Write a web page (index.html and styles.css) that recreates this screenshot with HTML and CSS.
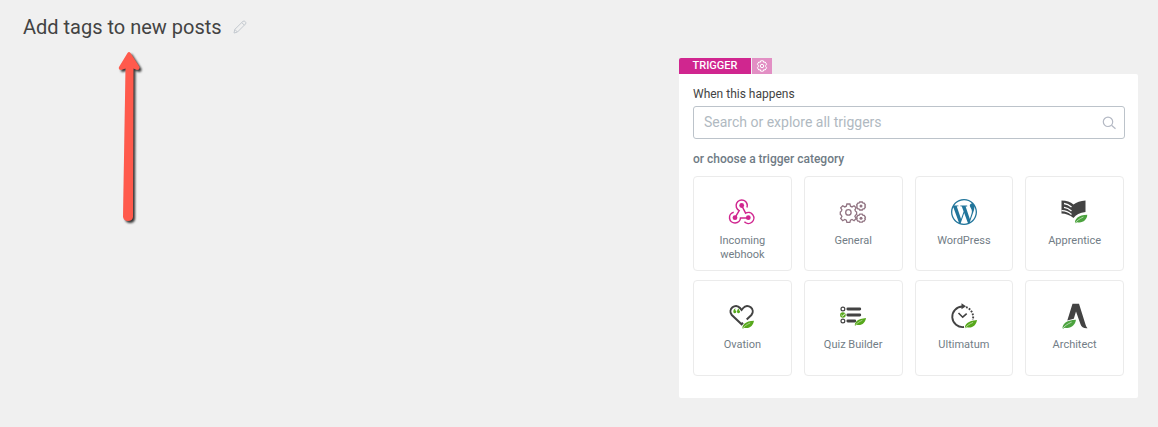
FILE: index.html
```html
<!DOCTYPE html>
<html lang="en">
<head>
<meta charset="utf-8">
<title>Add tags to new posts</title>
<link rel="stylesheet" href="styles.css">
</head>
<body>
<svg class="defs" aria-hidden="true">
  <symbol id="leaf" viewBox="0 0 12 9" preserveAspectRatio="none">
    <path d="M.9 9C.4 4.500 3.600.8 12 0c-.6 5.400-4.200 9-9.300 7.700z"/>
    <path d="M.5 9C2.400 6.200 5 4.200 8.400 2.500" fill="none" stroke="#fff" stroke-width=".5"/>
  </symbol>
</svg>
<header class="titlebar">
  <h1 class="title">Add tags to new posts</h1>
  <button class="edit" type="button" aria-label="Edit title">
    <svg width="14" height="14" viewBox="0 0 14 14"><path d="M1 13l.8-3.600L10 1.300c1.500-1 3.700 1 2.600 2.600l-8.200 8.200zM8.800 2.600l2.600 2.600M2 9.600l2.400 2.400"/></svg>
  </button>
</header>
<svg class="arrow" width="36" height="180" viewBox="0 0 36 180" aria-hidden="true">
  <path d="M14.500 3Q16 1 17.500 3L26.500 17Q27 20 24 20L20.500 18.500 20 167Q19.500 171 15 171 11 171 10 167L12.500 18.500 8 20Q5 20 6 17Z"/>
</svg>
<main class="content">
  <section class="trigger">
    <div class="tabs">
      <span class="tab">TRIGGER</span>
      <button class="settings" type="button" aria-label="Trigger settings">
        <svg width="12" height="12" viewBox="0 0 12 12"><path d="M4.700.8h2.600l.4 1.500 1.500-.3 1.400 2.200-.9 1v1.600l.9 1-1.400 2.200-1.500-.3-.4 1.500H4.700l-.4-1.500-1.500.3-1.400-2.200.9-1V5.200l-.9-1L2.800 2l1.500.3z"/><circle cx="6" cy="6" r="1.700"/></svg>
      </button>
    </div>
    <div class="panel">
      <label class="label" for="search">When this happens</label>
      <div class="searchbox">
        <input class="search" id="search" type="text" placeholder="Search or explore all triggers">
        <svg class="lens" width="14" height="14" viewBox="0 0 14 14"><circle cx="6" cy="5.800" r="4.700"/><path d="M9.500 9.300l4 3.500"/></svg>
      </div>
      <p class="subtitle">or choose a trigger category</p>
      <div class="grid">
        <button class="card" type="button">
          <svg class="icon" viewBox="0 0 26 26">
            <g fill="none" stroke="#d0268f" stroke-width="1.500">
              <path d="M6 18.600l4.200-7A5.600 5.600 0 1 1 18 8.500"/>
              <path d="M12.700 6.500l3.900 7.700a5.500 5.500 0 1 1-1.200 8.600"/>
              <path d="M19.300 18.900h-7.800a5.500 5.500 0 1 1-6.800-5.700"/>
            </g>
            <g fill="#d0268f"><circle cx="12.700" cy="6.500" r="2.400"/><circle cx="6" cy="18.700" r="2.400"/><circle cx="19.300" cy="18.700" r="2.400"/></g>
          </svg>
          Incoming webhook
        </button>
        <button class="card" type="button">
          <svg class="icon" viewBox="0 0 26 26">
            <g fill="none" stroke="#917482" stroke-width="1.300">
              <path d="M6.900 5h3l.6 2.200 1.500.7 2.100-1.200 2 2.200-1.200 2 .6 1.300 1.100.9v2.400l-1.100.7-.6 1.300 1.200 2-2 2.200-2.100-1.200-1.500.7-.6 2.200h-3l-.6-2.200-1.500-.7-2.100 1.200-2-2.200 1.200-2-.6-1.300-1-.7v-2.400l1-.9.6-1.300-1.200-2 2-2.200 2.100 1.200 1.500-.7z"/>
              <circle cx="8.400" cy="13.400" r="2.700"/>
              <path d="M19.700 3h2.600l.7 1.100h1.200l1.200 2-.6.900.6.900-1.200 2H23L22.300 11h-2.600L19 9.900h-1.200l-1.200-2 .6-.9-.6-.9 1.200-2H19zM19.700 15.200h2.600l.7 1.100h1.200l1.200 2-.6.900.6.900-1.200 2H23l-.7 1.100h-2.600l-.7-1.100h-1.200l-1.200-2 .6-.9-.6-.9 1.200-2H19z"/>
            </g>
            <g fill="#917482"><circle cx="21" cy="7" r="1.500"/><circle cx="21" cy="19.200" r="1.500"/></g>
          </svg>
          General
        </button>
        <button class="card" type="button">
          <svg class="icon" viewBox="0 0 24 24" fill="#21759b"><path d="M21.469 6.825c.84 1.537 1.318 3.300 1.318 5.175 0 3.979-2.156 7.456-5.363 9.325l3.295-9.527c.615-1.540.82-2.771.82-3.864 0-.405-.026-.78-.07-1.110m-7.981.105c.647-.03 1.232-.105 1.232-.105.582-.075.514-.93-.067-.899 0 0-1.755.135-2.880.135-1.064 0-2.850-.15-2.850-.15-.585-.03-.661.855-.075.885 0 0 .54.061 1.125.09l1.680 4.605-2.370 7.080L5.354 6.900c.649-.03 1.234-.1 1.234-.1.585-.075.516-.93-.065-.896 0 0-1.746.138-2.874.138-.2 0-.438-.008-.69-.015C4.911 3.150 8.235 1.215 12 1.215c2.809 0 5.365 1.072 7.286 2.833-.046-.003-.091-.009-.141-.009-1.060 0-1.812.923-1.812 1.914 0 .89.513 1.643 1.060 2.531.411.72.89 1.643.89 2.977 0 .915-.354 1.994-.821 3.479l-1.075 3.585-3.900-11.610.001.014zM12 22.784c-1.059 0-2.081-.153-3.048-.437l3.237-9.406 3.315 9.087c.024.053.05.101.078.149-1.120.393-2.325.609-3.582.609M1.211 12c0-1.564.336-3.050.935-4.390L7.290 21.709C3.694 19.960 1.212 16.271 1.211 12M12 0C5.385 0 0 5.385 0 12s5.385 12 12 12 12-5.385 12-12S18.615 0 12 0"/></svg>
          WordPress
        </button>
        <button class="card" type="button">
          <svg class="icon" viewBox="0 0 26 26">
            <path fill="#434343" d="M-.5 1.500Q7 1.500 11.500 5.500 16 2 23.500 1.500V13Q15 14 11.500 19 6 14.500-.5 14.500z"/>
            <path fill="none" stroke="#fff" stroke-width="1.300" d="M2 4.500Q6 5 9.500 8M2 8.300Q6 8.800 9.500 12M-.5 11.700Q5 11.500 9.500 15.500"/>
            <use href="#leaf" x="12" y="15.500" width="13.500" height="9" fill="#4ca33f"/>
          </svg>
          Apprentice
        </button>
        <button class="card" type="button">
          <svg class="icon" viewBox="0 0 26 26">
            <path fill="none" stroke="#434343" stroke-width="2" d="M14 19.800l-1.400 1.500L2.800 12C-1.800 6.500 6.500-.6 11 5l1.600 2L14.200 5C18.700-.6 27 6.500 22.400 12l-4.700 4.500"/>
            <path fill="#57a81c" d="M4.300 9q0-3.200 2.500-3.500-.8.900-.6 1.700 1.300.1 1.200 1.600-.2 1.400-1.500 1.400T4.300 9M8 9q0-3.200 2.500-3.500-.8.900-.6 1.700 1.300.1 1.200 1.600-.2 1.400-1.500 1.400T8 9"/>
            <use href="#leaf" x="12.500" y="17.500" width="12.500" height="8.500" fill="#57a81c"/>
          </svg>
          Ovation
        </button>
        <button class="card" type="button">
          <svg class="icon" viewBox="0 0 26 26">
            <g fill="none" stroke="#434343"><circle cx="2.900" cy="6" r="1.900" stroke-width="1.200"/><circle cx="2.900" cy="18" r="1.900" stroke-width="1.200"/><path stroke-width="2.800" stroke-linecap="round" d="M7.800 6h12M7.800 12h12M7.800 18h7"/></g>
            <circle cx="2.900" cy="12" r="2.800" fill="#57a81c"/><path d="M1.400 12l1.200 1.200 2.600-2.800" fill="none" stroke="#fff"/>
            <use href="#leaf" x="14" y="15" width="12" height="8" fill="#57a81c"/>
          </svg>
          Quiz Builder
        </button>
        <button class="card" type="button">
          <svg class="icon" viewBox="0 0 26 26">
            <g fill="none" stroke="#434343" stroke-width="1.900"><path d="M13 24A10.300 10.300 0 1 1 11.500 3.500"/><path stroke-dasharray="1.800 1.300" d="M15 4.200a10.300 10.300 0 0 1 6.700 12.800"/><path stroke-width="1.600" d="M7.500 10l4.200 4.200 4-3.500"/></g>
            <path fill="#434343" d="M10.500.3l4.500 3-4.500 3z"/>
            <use href="#leaf" x="13" y="17" width="13" height="8.500" fill="#57a81c"/>
          </svg>
          Ultimatum
        </button>
        <button class="card" type="button">
          <svg class="icon" viewBox="0 0 26 26">
            <path fill="#434343" d="M10.500.8h6.500L23.500 21.500q.5 2 2 3.800-5.500.5-7-4L14 8.500l-2.200 7.200L5.300 17.500z"/>
            <use href="#leaf" x="-.5" y="16.500" width="14.500" height="9.500" fill="#4ca33f"/>
          </svg>
          Architect
        </button>
      </div>
    </div>
  </section>
</main>
</body>
</html>
```
FILE: styles.css
```css
* {
  box-sizing: border-box;
}

body {
  margin: 0;
  background: #f0f0f0;
  color: #434343;
  font-family: Roboto, "Liberation Sans", sans-serif;
  font-size: 12px;
}

button {
  padding: 0;
  border: 0;
  background: none;
  font: inherit;
  cursor: pointer;
}

.defs {
  display: none;
}

.titlebar {
  display: flex;
  align-items: center;
  gap: 11px;
  height: 54px;
  padding-left: 23px;
}

.title {
  margin: 0;
  font-size: 20px;
  font-weight: 400;
  line-height: 24px;
}

.edit svg {
  display: block;
  fill: none;
  stroke: #c3c9cf;
}

/* Callout that lies over the page */
.arrow {
  position: absolute;
  left: 113px;
  top: 50px;
  fill: #ff5a4c;
  filter: drop-shadow(2px 2px 1px #333);
}

.content {
  display: flex;
  justify-content: flex-end;
  padding: 4px 20px 28px;
}

.trigger {
  flex: 0 1 459px;
}

.tabs {
  display: flex;
  gap: 1px;
  height: 16px;
}

.tab {
  width: 72px;
  border-radius: 2px 0 0 0;
  background: #d0268f;
  color: #fff;
  font-size: 11px;
  font-weight: 500;
  line-height: 16px;
  text-align: center;
}

.settings {
  display: grid;
  place-items: center;
  width: 20px;
  background: #e28fc4;
}

.settings svg {
  fill: none;
  stroke: #fff;
}

.panel {
  padding: 12px 13px 22px 14px;
  border-radius: 0 2px 2px 2px;
  background: #fff;
}

.label {
  display: block;
  margin-bottom: 4px;
  line-height: 16px;
}

.searchbox {
  display: flex;
  align-items: center;
  gap: 8px;
  height: 33px;
  padding: 0 8px 0 10px;
  border: 1px solid #bcc3ca;
  border-radius: 3px;
}

.search {
  flex: 1;
  min-width: 0;
  padding: 0 0 2px;
  border: 0;
  outline: 0;
  background: none;
  color: #434343;
  font: 14px/20px Roboto, "Liberation Sans", sans-serif;
}

.search::placeholder {
  color: #b0b9c1;
  opacity: 1;
}

.lens {
  fill: none;
  stroke: #b4b9c4;
  stroke-width: 1.2;
}

.subtitle {
  margin: 12px 0 9px;
  color: #6f7b85;
  font-weight: 500;
  line-height: 16px;
}

.grid {
  display: grid;
  grid-template-columns: repeat(4, 1fr);
  grid-template-rows: 95px 96px;
  gap: 9px 12px;
  padding-right: 1px;
}

.card {
  display: flex;
  flex-direction: column;
  align-items: center;
  gap: 9px;
  padding: 22px 16px 0;
  border: 1px solid #ebebeb;
  border-radius: 4px;
  color: #727d86;
  font-size: 11px;
  line-height: 14px;
}

.icon {
  flex: none;
  width: 26px;
  height: 26px;
  overflow: visible;
}
```
